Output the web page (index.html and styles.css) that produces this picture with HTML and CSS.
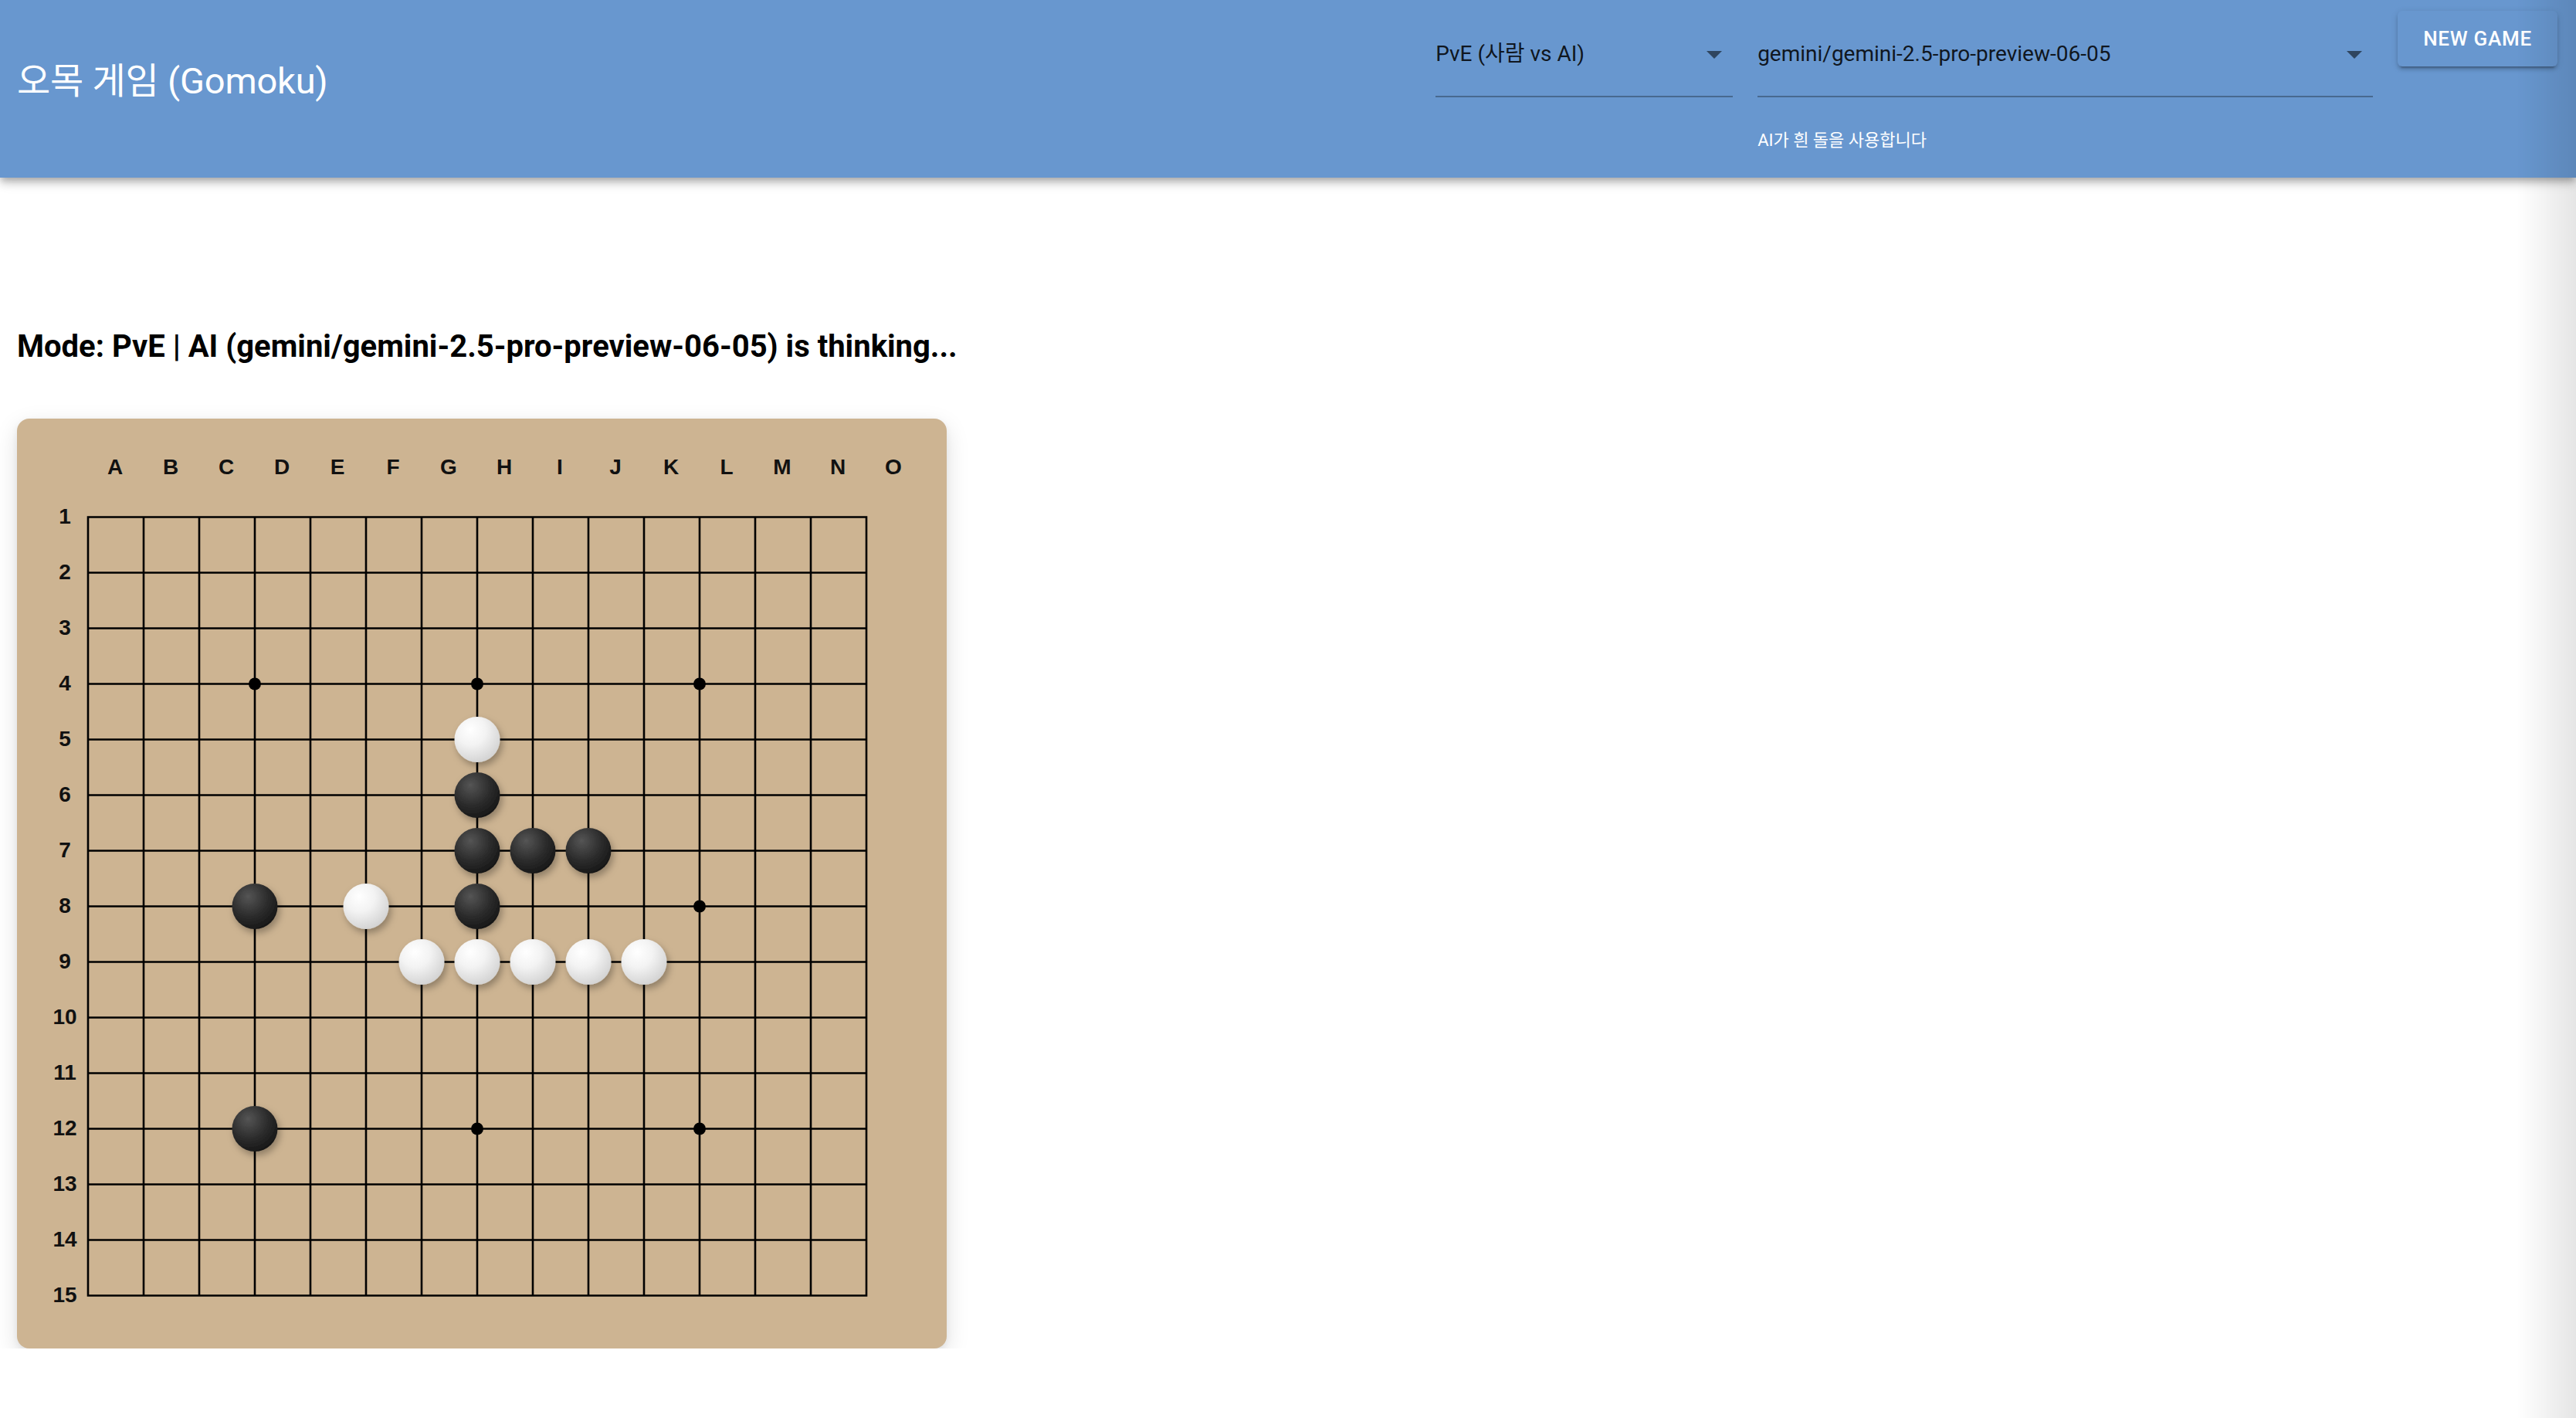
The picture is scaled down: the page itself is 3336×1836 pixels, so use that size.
FILE: index.html
```html
<!DOCTYPE html>
<html lang="ko">
<head>
<meta charset="utf-8">
<title>오목 게임 (Gomoku)</title>
<link rel="stylesheet" href="styles.css">
</head>
<body>
<header class="appbar">
  <h1 class="title">오목 게임 (Gomoku)</h1>
  <div class="controls">
    <div class="field field-mode">
      <div class="select">PvE (사람 vs AI)
        <svg class="arrow" viewBox="0 0 24 24"><path d="M7 10l5 5 5-5z"/></svg>
      </div>
    </div>
    <div class="field field-model">
      <div class="select">gemini/gemini-2.5-pro-preview-06-05
        <svg class="arrow" viewBox="0 0 24 24"><path d="M7 10l5 5 5-5z"/></svg>
      </div>
      <p class="helper">AI가 흰 돌을 사용합니다</p>
    </div>
    <button class="new-game">New Game</button>
  </div>
</header>

<main class="content">
  <h2 class="status">Mode: PvE | AI (gemini/gemini-2.5-pro-preview-06-05) is thinking...</h2>

  <div class="board">
    <div class="corner"></div>
    <div class="col-labels">
      <span>A</span><span>B</span><span>C</span><span>D</span><span>E</span><span>F</span><span>G</span><span>H</span><span>I</span><span>J</span><span>K</span><span>L</span><span>M</span><span>N</span><span>O</span>
    </div>
    <div class="row-labels">
      <span>1</span><span>2</span><span>3</span><span>4</span><span>5</span><span>6</span><span>7</span><span>8</span><span>9</span><span>10</span><span>11</span><span>12</span><span>13</span><span>14</span><span>15</span>
    </div>
    <svg class="grid" width="1080" height="1080" viewBox="0 0 1080 1080">
      <defs>
        <radialGradient id="g-white" cx="38%" cy="32%" r="72%" fx="35%" fy="28%">
          <stop offset="0%" stop-color="#ffffff"/>
          <stop offset="45%" stop-color="#f3f3f3"/>
          <stop offset="100%" stop-color="#d2d2d2"/>
        </radialGradient>
        <radialGradient id="g-black" cx="38%" cy="32%" r="72%" fx="35%" fy="28%">
          <stop offset="0%" stop-color="#555555"/>
          <stop offset="55%" stop-color="#2e2e2e"/>
          <stop offset="100%" stop-color="#161616"/>
        </radialGradient>
        <filter id="stone-shadow" x="-50%" y="-50%" width="200%" height="200%">
          <feDropShadow dx="3" dy="5" stdDeviation="5" flood-color="#000" flood-opacity="0.3"/>
        </filter>
      </defs>
      <path class="lines" d="M1 36.5V1044.5M73 36.5V1044.5M145 36.5V1044.5M217 36.5V1044.5M289 36.5V1044.5M361 36.5V1044.5M433 36.5V1044.5M505 36.5V1044.5M577 36.5V1044.5M649 36.5V1044.5M721 36.5V1044.5M793 36.5V1044.5M865 36.5V1044.5M937 36.5V1044.5M1009 36.5V1044.5M1 36.5H1009M1 108.5H1009M1 180.5H1009M1 252.5H1009M1 324.5H1009M1 396.5H1009M1 468.5H1009M1 540.5H1009M1 612.5H1009M1 684.5H1009M1 756.5H1009M1 828.5H1009M1 900.5H1009M1 972.5H1009M1 1044.5H1009"/>
      <g class="stars">
        <circle cx="217" cy="252.5" r="8"/><circle cx="505" cy="252.5" r="8"/><circle cx="793" cy="252.5" r="8"/>
        <circle cx="217" cy="540.5" r="8"/><circle cx="505" cy="540.5" r="8"/><circle cx="793" cy="540.5" r="8"/>
        <circle cx="217" cy="828.5" r="8"/><circle cx="505" cy="828.5" r="8"/><circle cx="793" cy="828.5" r="8"/>
      </g>
      <g class="stones" filter="url(#stone-shadow)">
        <circle class="white" cx="505" cy="324.5" r="29.5"/>
        <circle class="black" cx="505" cy="396.5" r="29.5"/>
        <circle class="black" cx="505" cy="468.5" r="29.5"/>
        <circle class="black" cx="577" cy="468.5" r="29.5"/>
        <circle class="black" cx="649" cy="468.5" r="29.5"/>
        <circle class="black" cx="217" cy="540.5" r="29.5"/>
        <circle class="white" cx="361" cy="540.5" r="29.5"/>
        <circle class="black" cx="505" cy="540.5" r="29.5"/>
        <circle class="white" cx="433" cy="612.5" r="29.5"/>
        <circle class="white" cx="505" cy="612.5" r="29.5"/>
        <circle class="white" cx="577" cy="612.5" r="29.5"/>
        <circle class="white" cx="649" cy="612.5" r="29.5"/>
        <circle class="white" cx="721" cy="612.5" r="29.5"/>
        <circle class="black" cx="217" cy="828.5" r="29.5"/>
      </g>
    </svg>
  </div>
</main>

<div class="edge-shade"></div>
</body>
</html>
```

FILE: styles.css
```css
* {
  box-sizing: border-box;
}

html, body {
  margin: 0;
  padding: 0;
  background: #ffffff;
}

body {
  font-family: Roboto, "Noto Sans CJK KR", "Noto Sans", sans-serif;
  color: #000;
}

.appbar {
  display: flex;
  align-items: flex-start;
  height: 230px;
  padding: 0 24px 0 22px;
  background: #6897cf;
  color: #fff;
  box-shadow: 0 4px 8px -2px rgba(0, 0, 0, 0.2), 0 8px 10px 0 rgba(0, 0, 0, 0.14), 0 2px 20px 0 rgba(0, 0, 0, 0.12);
  position: relative;
  z-index: 1;
}

.title {
  margin: 77px 0 0;
  font-size: 47px;
  line-height: 56px;
  font-weight: 400;
  letter-spacing: -0.2px;
  white-space: nowrap;
}

.controls {
  margin-left: auto;
  margin-top: 14px;
  display: flex;
  align-items: flex-start;
  gap: 32px;
}

.field-mode {
  width: 385px;
}

.field-model {
  width: 797px;
}

.select {
  position: relative;
  padding: 42px 0 40px;
  font-size: 28px;
  line-height: 28px;
  color: rgba(0, 0, 0, 0.87);
  border-bottom: 2px solid rgba(0, 0, 0, 0.3);
  white-space: nowrap;
}

.arrow {
  position: absolute;
  right: 0;
  top: 32px;
  width: 48px;
  height: 48px;
  fill: rgba(0, 0, 0, 0.54);
}

.helper {
  margin: 44px 0 0;
  font-size: 22px;
  line-height: 24px;
  color: #fff;
}

.new-game {
  height: 72px;
  padding: 0 33px;
  border: none;
  border-radius: 6px;
  background: #6897cf;
  color: #fff;
  font-family: Roboto, sans-serif;
  font-size: 26px;
  font-weight: 500;
  letter-spacing: 0.75px;
  text-transform: uppercase;
  box-shadow: 0 6px 2px -4px rgba(0, 0, 0, 0.2), 0 4px 4px 0 rgba(0, 0, 0, 0.14), 0 2px 10px 0 rgba(0, 0, 0, 0.12);
}

.content {
  padding: 194px 22px 0;
}

.status {
  margin: 0 0 69px;
  font-size: 40px;
  line-height: 49px;
  font-weight: 700;
  white-space: nowrap;
}

.board {
  width: 1204px;
  height: 1204px;
  padding: 35px 33px 33px;
  background: #cdb492;
  border-radius: 16px;
  box-shadow: 0 10px 30px rgba(0, 0, 0, 0.13), 0 3px 8px rgba(0, 0, 0, 0.06);
  display: grid;
  grid-template-columns: 58px 1080px;
  grid-template-rows: 56px 1080px;
  font-family: "Liberation Sans", Arial, sans-serif;
  font-weight: 700;
  font-size: 28px;
  color: #111;
}

.col-labels {
  grid-column: 2;
  grid-row: 1;
  display: flex;
}

.col-labels span {
  width: 72px;
  display: flex;
  align-items: center;
  justify-content: center;
}

.row-labels {
  grid-column: 1;
  grid-row: 2;
  display: flex;
  flex-direction: column;
}

.row-labels span {
  height: 72px;
  display: flex;
  align-items: center;
  justify-content: center;
}

.grid {
  grid-column: 2;
  grid-row: 2;
  display: block;
  overflow: visible;
}

.lines {
  fill: none;
  stroke: #000;
  stroke-width: 2.6;
  stroke-linecap: square;
}

.stars circle {
  fill: #000;
}

.stones .white {
  fill: url(#g-white);
}

.stones .black {
  fill: url(#g-black);
}

.edge-shade {
  position: fixed;
  top: 0;
  right: 0;
  bottom: 0;
  width: 76px;
  background: linear-gradient(to right, rgba(0, 0, 0, 0), rgba(0, 0, 0, 0.1));
  pointer-events: none;
  z-index: 2;
}
```
